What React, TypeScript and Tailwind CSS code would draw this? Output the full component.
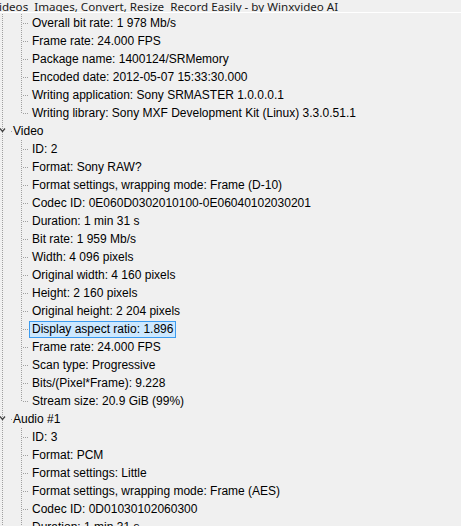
import React from 'react';

type Row = {
  text: string;
  level: 0 | 1;
  last?: boolean;
  selected?: boolean;
  hasChildren?: boolean;
};

const rows: Row[] = [
  { text: 'Overall bit rate: 1 978 Mb/s', level: 1 },
  { text: 'Frame rate: 24.000 FPS', level: 1 },
  { text: 'Package name: 1400124/SRMemory', level: 1 },
  { text: 'Encoded date: 2012-05-07 15:33:30.000', level: 1 },
  { text: 'Writing application: Sony SRMASTER 1.0.0.0.1', level: 1 },
  { text: 'Writing library: Sony MXF Development Kit (Linux) 3.3.0.51.1', level: 1, last: true },
  { text: 'Video', level: 0, hasChildren: true },
  { text: 'ID: 2', level: 1 },
  { text: 'Format: Sony RAW?', level: 1 },
  { text: 'Format settings, wrapping mode: Frame (D-10)', level: 1 },
  { text: 'Codec ID: 0E060D0302010100-0E06040102030201', level: 1 },
  { text: 'Duration: 1 min 31 s', level: 1 },
  { text: 'Bit rate: 1 959 Mb/s', level: 1 },
  { text: 'Width: 4 096 pixels', level: 1 },
  { text: 'Original width: 4 160 pixels', level: 1 },
  { text: 'Height: 2 160 pixels', level: 1 },
  { text: 'Original height: 2 204 pixels', level: 1 },
  { text: 'Display aspect ratio: 1.896', level: 1, selected: true },
  { text: 'Frame rate: 24.000 FPS', level: 1 },
  { text: 'Scan type: Progressive', level: 1 },
  { text: 'Bits/(Pixel*Frame): 9.228', level: 1 },
  { text: 'Stream size: 20.9 GiB (99%)', level: 1, last: true },
  { text: 'Audio #1', level: 0, hasChildren: true },
  { text: 'ID: 3', level: 1 },
  { text: 'Format: PCM', level: 1 },
  { text: 'Format settings: Little', level: 1 },
  { text: 'Format settings, wrapping mode: Frame (AES)', level: 1 },
  { text: 'Codec ID: 0D01030102060300', level: 1 },
  { text: 'Duration: 1 min 31 s', level: 1 },
];

const LINE = '#a0a0a0';

// connector lines drawn per row
const Gutter: React.FC<{ row: Row }> = ({ row }) => {
  if (row.level === 0) {
    return (
      <svg width="29" height="18" className="shrink-0">
        <line x1="2.5" y1="0" x2="2.5" y2="18" stroke={LINE} strokeDasharray="1 1" />
        <polyline points="0,6.5 2.5,9.5 5,6.5" fill="none" stroke="#404040" strokeWidth="1.2" />
        <rect x="11" y="9" width="1" height="1" fill={LINE} />
      </svg>
    );
  }
  return (
    <svg width="29" height="18" className="shrink-0">
      <line x1="2.5" y1="0" x2="2.5" y2="18" stroke={LINE} strokeDasharray="1 1" />
      <line x1="21.5" y1="0" x2="21.5" y2={row.last ? 9 : 18} stroke={LINE} strokeDasharray="1 1" />
      <line x1="23" y1="9.5" x2="29" y2="9.5" stroke={LINE} strokeDasharray="1 1" />
    </svg>
  );
};

export default function App() {
  return (
    <div
      className="w-[461px] h-[526px] overflow-hidden bg-[#f0f0f0] text-black"
      style={{ fontFamily: '"Liberation Sans", Arial, sans-serif' }}
    >
      <div className="h-[12px] overflow-hidden flex items-end">
        <span
          className="whitespace-pre text-[11.6px] leading-[16px] text-[#1a1a1a] ml-[-8px] mb-[-3px]"
          style={{ fontFamily: '"Noto Sans", "Open Sans", sans-serif' }}
        >
          {'Videos  Images, Convert, Resize  Record Easily - by Winxvideo AI'}
        </span>
      </div>
      <div className="h-px bg-white" />
      <div className="h-px" />
      <div className="flex flex-col">
        {rows.map((row, i) => (
          <div key={i} className="flex items-center h-[18px] whitespace-nowrap">
            <Gutter row={row} />
            {row.level === 0 ? (
              <span className="ml-[-16px] text-[12px] leading-[18px]">{row.text}</span>
            ) : (
              <span
                className={`h-[17px] px-[2px] border text-[12px] leading-[15px] ${
                  row.selected ? 'border-[#3c9cf0] bg-[#cce8ff]' : 'border-transparent'
                }`}
              >
                {row.text}
              </span>
            )}
          </div>
        ))}
      </div>
    </div>
  );
}
